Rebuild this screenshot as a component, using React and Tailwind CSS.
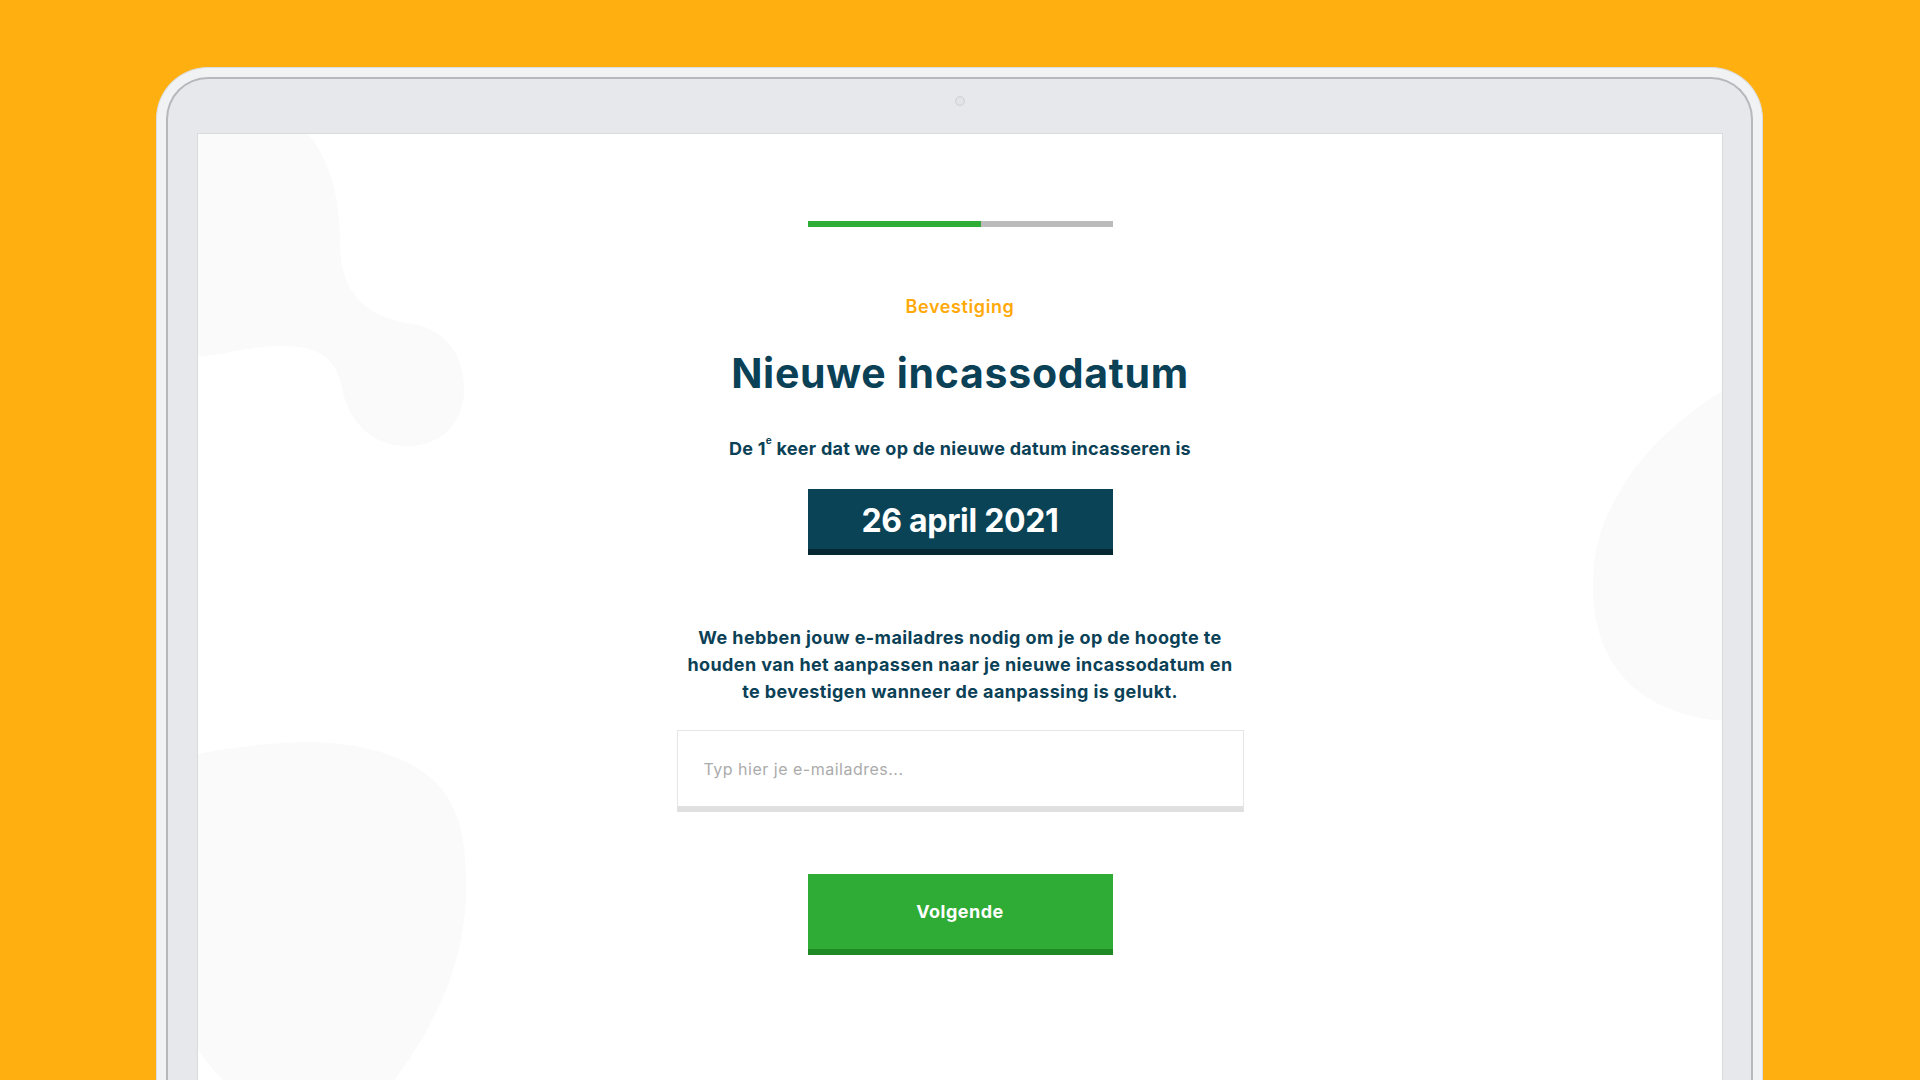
import React, { useState } from "react";

const font = { fontFamily: "Inter, 'Noto Sans', sans-serif" };

const Blobs = () => (
    <svg className="absolute inset-0 pointer-events-none" width="1526" height="947" viewBox="0 0 1526 947">
        <path
            fill="#fafafa"
            d="M0 0 H110 C135 30 142 70 142 110 C142 160 170 185 216 190 C250 197 268 225 266 260 C263 295 238 312 210 312 C175 312 150 290 143 250 C136 220 115 212 83 212 C50 212 25 222 0 222 Z"
        />
        <path
            fill="#fafafa"
            d="M0 620 C40 612 80 608 116 608 C180 610 230 630 250 664 C266 690 268 720 268 754 C268 820 245 880 196 947 H26 C15 935 5 925 0 914 Z"
        />
        <path
            fill="#fafafa"
            d="M1526 256 C1480 285 1440 320 1415 370 C1398 400 1395 430 1395 453 C1395 530 1440 580 1526 587 Z"
        />
    </svg>
);

const App = () => {
    const [email, setEmail] = useState("");
    const step = 0.57;

    return (
        <div className="w-[1920px] h-[1080px] overflow-hidden bg-[#ffaf10] pt-[67px] pl-[156px]" style={font}>
            {/* laptop frame */}
            <div className="w-[1607px] h-[1040px] rounded-t-[52px] bg-[#f1f2f4] border border-b-0 border-[#dcdde0] pt-[9px] px-[9px]">
                <div className="relative h-full rounded-t-[42px] border-2 border-b-0 border-[#b6b8bc] bg-[#e7e8eb] pt-[54px] pl-[29px] pr-[28px]">
                    <div className="absolute left-1/2 -translate-x-1/2 top-[17px] w-[10px] h-[10px] rounded-full border border-[#cfd0d4] bg-[#e2e3e6]" />

                    {/* screen */}
                    <div className="relative h-full bg-white border-t border-l border-r border-[#dadbde] overflow-hidden">
                        <Blobs />

                        <div className="relative flex flex-col items-center pt-[87px]">
                            {/* progress */}
                            <div className="flex w-[305px] h-[6px] bg-[#bbbbbb]">
                                <div className="h-full bg-[#2fac36]" style={{ width: `${step * 100}%` }} />
                            </div>

                            <p className="mt-[68px] h-[24px] leading-[24px] text-[18px] font-semibold tracking-[0.6px] text-[#ffa90a]">
                                Bevestiging
                            </p>

                            <h1 className="mt-[30px] h-[48px] leading-[48px] text-[41px] font-bold text-[#0b4156] tracking-[0.7px]">
                                Nieuwe incassodatum
                            </h1>

                            <p className="mt-[40px] h-[24px] leading-[24px] text-[18px] font-bold tracking-[0.25px] text-[#0b4156]">
                                De 1<sup className="text-[10px] align-[6px]">e</sup> keer dat we op de nieuwe datum incasseren is
                            </p>

                            {/* date */}
                            <div className="mt-[28px] w-[305px] h-[66px] bg-[#0a4355] border-b-[6px] border-[#062832] flex items-center justify-center pt-[3px]">
                                <span className="text-[32px] font-bold tracking-[-0.3px] text-white leading-none">26 april 2021</span>
                            </div>

                            <p className="mt-[69px] w-[620px] text-center text-[18px] leading-[27px] font-bold tracking-[0.4px] text-[#0b4156]">
                                We hebben jouw e-mailadres nodig om je op de hoogte te
                                <br />
                                houden van het aanpassen naar je nieuwe incassodatum en
                                <br />
                                te bevestigen wanneer de aanpassing is gelukt.
                            </p>

                            {/* email input */}
                            <div className="mt-[25px] w-[567px] h-[82px] bg-white border border-[#e6e6e6] border-b-[6px] border-b-[#e0e0e0]">
                                <input
                                    type="email"
                                    value={email}
                                    onChange={(e) => setEmail(e.target.value)}
                                    placeholder="Typ hier je e-mailadres..."
                                    className="w-full h-full px-[26px] text-[16px] tracking-[0.5px] text-[#0b4156] placeholder:text-[#ababab] outline-none bg-transparent"
                                    style={font}
                                />
                            </div>

                            <button className="mt-[62px] w-[305px] h-[81px] bg-[#2fac36] border-b-[6px] border-[#1f8a24] text-white text-[18px] font-bold tracking-[0.5px]">
                                Volgende
                            </button>
                        </div>
                    </div>
                </div>
            </div>
        </div>
    );
};

export default App;
